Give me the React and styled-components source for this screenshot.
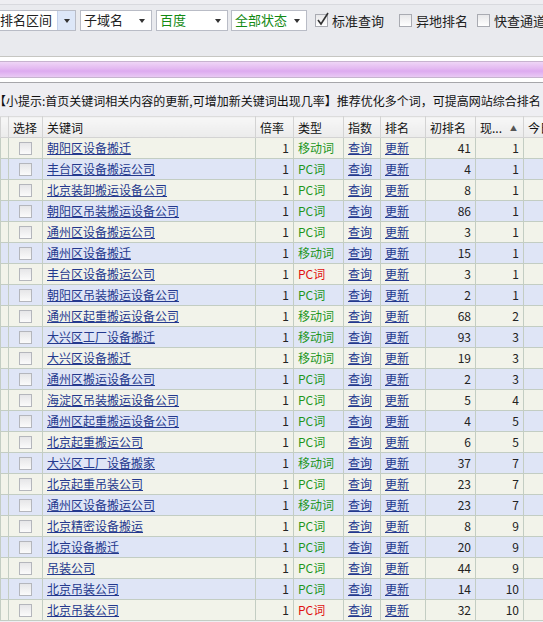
import styled, { createGlobalStyle } from 'styled-components'

const GlobalStyle = createGlobalStyle`
  html, body {
    margin: 0;
    padding: 0;
    background: #eeeef2;
    font-family: "Liberation Sans", "Noto Sans CJK SC", sans-serif;
    font-size: 12px;
    color: #222;
  }
  #root {
    width: 543px;
    height: 622px;
    overflow: hidden;
  }
`

const Page = styled.div`
  width: 543px;
  height: 622px;
  overflow: hidden;
  background: #eeeef2;
`

const Toolbar = styled.div`
  margin-top: 4px;
  border-top: 1px solid #d8d9de;
  border-bottom: 1px solid #c6c6c2;
  background: #e9eaee;
  display: flex;
  align-items: flex-start;
  padding-top: 5px;
  box-sizing: border-box;
  height: 53px;
`

const SelectBox = styled.div`
  display: flex;
  align-items: center;
  width: ${p => p.$w}px;
  height: 21px;
  margin-left: ${p => p.$ml}px;
  box-sizing: border-box;
  border: 1px solid #b9bcc6;
  background: #fff;
  font-size: 13px;
  color: ${p => (p.$green ? '#138a13' : '#222')};
  flex-shrink: 0;
`

const SelectText = styled.span`
  flex: 1;
  padding-left: 3px;
  white-space: nowrap;
  overflow: hidden;
  line-height: 19px;
`

const Arrow = styled.span`
  width: 18px;
  height: 19px;
  display: flex;
  align-items: center;
  justify-content: center;
  box-sizing: border-box;
  background: ${p => (p.$active ? '#dde7f8' : 'transparent')};
  border-left: ${p => (p.$active ? '1px solid #c4d2ec' : 'none')};
  &::after {
    content: '';
    border-left: 3px solid transparent;
    border-right: 3px solid transparent;
    border-top: 4px solid #333;
  }
`

const CheckLabel = styled.label`
  display: flex;
  align-items: center;
  height: 21px;
  margin-left: ${p => p.$ml}px;
  font-size: 13px;
  color: #222;
  white-space: nowrap;
  flex-shrink: 0;
`

const ToolBox = styled.span`
  width: 11px;
  height: 11px;
  border: 1px solid #a9abb2;
  background: linear-gradient(#e8e8ea, #ffffff);
  margin-right: 4px;
  position: relative;
  flex-shrink: 0;
`

const Tick = styled.svg`
  position: absolute;
  left: 0;
  top: -3px;
`

const Separator = styled.div`
  height: 4px;
  background: #fff;
`

const PurpleBar = styled.div`
  height: 15px;
  border-top: 1px solid #c7b3cf;
  border-bottom: 1px solid #c7b3cf;
  background: linear-gradient(#efd6f6 0%, #e3b8f1 45%, #ddaaf0 60%, #e9c9f4 100%);
`

const WhiteGap = styled.div`
  height: 4px;
  background: #fff;
  border-bottom: 1px solid #a6a6aa;
`

const Tip = styled.div`
  height: 33px;
  padding-top: 9px;
  box-sizing: border-box;
  margin-left: -6px;
  white-space: nowrap;
  font-size: 12px;
  font-family: "Noto Sans CJK SC", sans-serif;
  color: #111;
  line-height: 17px;
`

const Table = styled.table`
  border-collapse: collapse;
  table-layout: fixed;
  width: 603px;
  font-family: "Noto Sans CJK SC", sans-serif;
  font-size: 12px;
`

const HeadCell = styled.th`
  height: 20px;
  padding: 0 0 0 4px;
  font-weight: normal;
  text-align: left;
  white-space: nowrap;
  overflow: hidden;
  color: #111;
  background: linear-gradient(#f7f7f7, #ebebeb);
  border: 1px solid #d3d3d3;
  border-top: 1px solid #dcdcdc;
`

const SortMark = styled.span`
  font-size: 7px;
  color: #555;
  margin-left: 8px;
  vertical-align: 2px;
`

const Row = styled.tr`
  background: ${p => (p.$alt ? '#dfe5f6' : '#f2f3ea')};
`

const Cell = styled.td`
  height: 20px;
  padding: 0 4px;
  border: 1px solid #c3cdc3;
  white-space: nowrap;
  overflow: hidden;
  text-align: ${p => p.$align || 'left'};
  color: ${p => p.$color || '#222'};
  line-height: 20px;
`

const Box = styled.span`
  display: inline-block;
  width: 11px;
  height: 11px;
  border: 1px solid #b4b6bc;
  background: linear-gradient(#e6e6e8, #fbfbfb);
  vertical-align: -2px;
`

const Link = styled.a`
  color: #24398e;
  text-decoration: underline;
  cursor: pointer;
`

const GREEN = '#1d961d'
const RED = '#e01010'

const rows = [
  ['朝阳区设备搬迁', '移动词', 41, 1],
  ['丰台区设备搬运公司', 'PC词', 4, 1],
  ['北京装卸搬运设备公司', 'PC词', 8, 1],
  ['朝阳区吊装搬运设备公司', 'PC词', 86, 1],
  ['通州区设备搬运公司', 'PC词', 3, 1],
  ['通州区设备搬迁', '移动词', 15, 1],
  ['丰台区设备搬运公司', 'PC词', 3, 1, true],
  ['朝阳区吊装搬运设备公司', 'PC词', 2, 1],
  ['通州区起重搬运设备公司', '移动词', 68, 2],
  ['大兴区工厂设备搬迁', '移动词', 93, 3],
  ['大兴区设备搬迁', '移动词', 19, 3],
  ['通州区搬运设备公司', 'PC词', 2, 3],
  ['海淀区吊装搬运设备公司', 'PC词', 5, 4],
  ['通州区起重搬运设备公司', 'PC词', 4, 5],
  ['北京起重搬运公司', 'PC词', 6, 5],
  ['大兴区工厂设备搬家', '移动词', 37, 7],
  ['北京起重吊装公司', 'PC词', 23, 7],
  ['通州区设备搬运公司', '移动词', 23, 7],
  ['北京精密设备搬运', 'PC词', 8, 9],
  ['北京设备搬迁', 'PC词', 20, 9],
  ['吊装公司', 'PC词', 44, 9],
  ['北京吊装公司', 'PC词', 14, 10],
  ['北京吊装公司', 'PC词', 32, 10, true],
]

function Select({ w, ml, text, green, active }) {
  return (
    <SelectBox $w={w} $ml={ml} $green={green}>
      <SelectText>{text}</SelectText>
      <Arrow $active={active} />
    </SelectBox>
  )
}

function Check({ ml, checked, children }) {
  return (
    <CheckLabel $ml={ml}>
      <ToolBox>
        {checked && (
          <Tick width="14" height="14" viewBox="0 0 14 14">
            <path d="M2 8 L5 12 L12 1" fill="none" stroke="#333" strokeWidth="1.6" />
          </Tick>
        )}
      </ToolBox>
      {children}
    </CheckLabel>
  )
}

export default function App() {
  return (
    <Page>
      <GlobalStyle />
      <Toolbar>
        <Select w={80} ml={-4} text="排名区间" active />
        <Select w={72} ml={4} text="子域名" />
        <Select w={72} ml={4} text="百度" green />
        <Select w={76} ml={3} text="全部状态" green />
        <Check ml={8} checked>标准查询</Check>
        <Check ml={15}>异地排名</Check>
        <Check ml={9}>快查通道</Check>
      </Toolbar>
      <Separator />
      <PurpleBar />
      <WhiteGap />
      <Tip>【小提示:首页关键词相关内容的更新,可增加新关键词出现几率】推荐优化多个词，可提高网站综合排名</Tip>
      <Table>
        <colgroup>
          <col style={{ width: 8 }} />
          <col style={{ width: 34 }} />
          <col style={{ width: 213 }} />
          <col style={{ width: 38 }} />
          <col style={{ width: 50 }} />
          <col style={{ width: 37 }} />
          <col style={{ width: 45 }} />
          <col style={{ width: 50 }} />
          <col style={{ width: 48 }} />
          <col style={{ width: 80 }} />
        </colgroup>
        <thead>
          <tr>
            <HeadCell />
            <HeadCell>选择</HeadCell>
            <HeadCell>关键词</HeadCell>
            <HeadCell>倍率</HeadCell>
            <HeadCell>类型</HeadCell>
            <HeadCell>指数</HeadCell>
            <HeadCell>排名</HeadCell>
            <HeadCell>初排名</HeadCell>
            <HeadCell>现...<SortMark>▲</SortMark></HeadCell>
            <HeadCell>今日</HeadCell>
          </tr>
        </thead>
        <tbody>
          {rows.map((r, i) => (
            <Row key={i} $alt={i % 2 === 1}>
              <Cell />
              <Cell $align="center"><Box /></Cell>
              <Cell><Link>{r[0]}</Link></Cell>
              <Cell $align="right">1</Cell>
              <Cell $color={r[4] ? RED : GREEN}>{r[1]}</Cell>
              <Cell><Link>查询</Link></Cell>
              <Cell><Link>更新</Link></Cell>
              <Cell $align="right">{r[2]}</Cell>
              <Cell $align="right">{r[3]}</Cell>
              <Cell />
            </Row>
          ))}
        </tbody>
      </Table>
    </Page>
  )
}
